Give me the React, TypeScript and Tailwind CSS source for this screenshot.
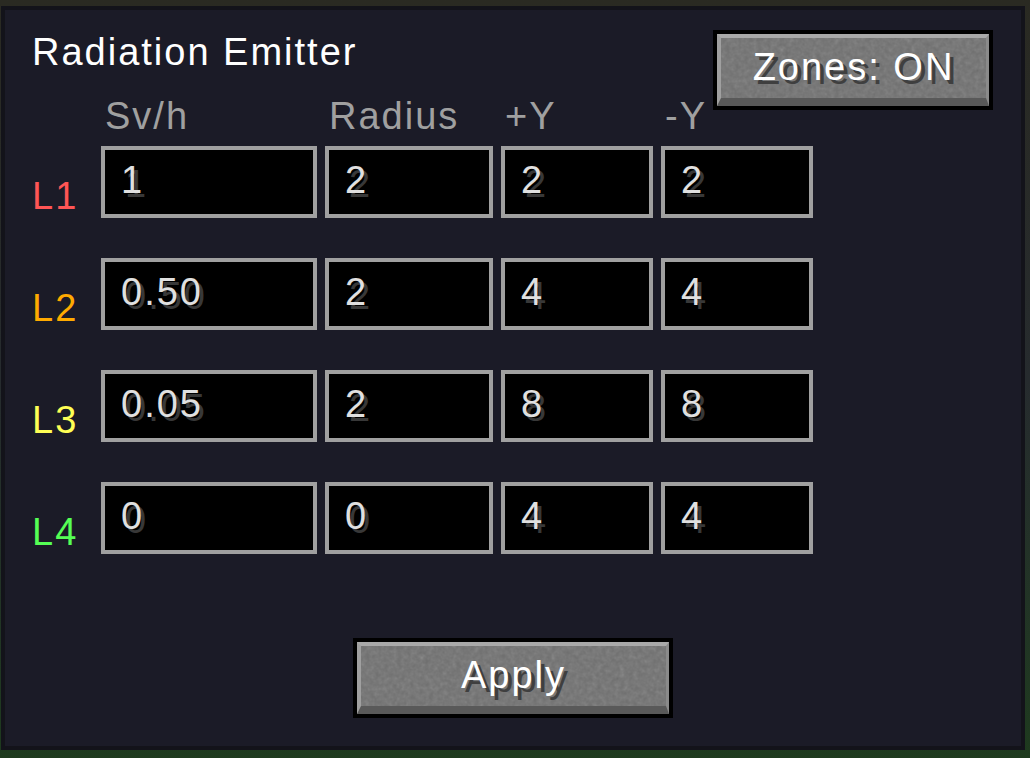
import React from 'react';

type Level = {
  label: string;
  color: string;
  values: [string, string, string, string];
};

const levels: Level[] = [
  { label: 'L1', color: 'text-[#ff5555]', values: ['1', '2', '2', '2'] },
  { label: 'L2', color: 'text-[#ffaa00]', values: ['0.50', '2', '4', '4'] },
  { label: 'L3', color: 'text-[#ffff55]', values: ['0.05', '2', '8', '8'] },
  { label: 'L4', color: 'text-[#55ff55]', values: ['0', '0', '4', '4'] },
];

const headers = ['Sv/h', 'Radius', '+Y', '-Y'];

const gridCols = 'grid grid-cols-[61px_216px_168px_152px_152px] gap-x-2';

// stone-ish speckle for the button face
const Speckle: React.FC = () => (
  <svg className="pointer-events-none absolute inset-0 h-full w-full opacity-25" aria-hidden>
    <filter id="stone">
      <feTurbulence type="fractalNoise" baseFrequency="0.22" numOctaves="2" seed="4" />
      <feColorMatrix type="saturate" values="0" />
    </filter>
    <rect width="100%" height="100%" filter="url(#stone)" />
  </svg>
);

const McButton: React.FC<{ label: string; className?: string }> = ({ label, className }) => (
  <button className={`shrink-0 border-4 border-black bg-black h-[80px] ${className ?? ''}`}>
    <div className="relative flex h-full items-center justify-center border-t-4 border-l-4 border-r-[3px] border-b-[8px] border-t-[#a9a9a9] border-l-[#a0a0a0] border-r-[#8a8a8a] border-b-[#595959] bg-[#6f6f6f] pb-[2px]">
      <Speckle />
      <span className="relative text-[38px] leading-none tracking-[2px] text-white [text-shadow:4px_4px_0_#3f3f3f]">
        {label}
      </span>
    </div>
  </button>
);

const Field: React.FC<{ value: string }> = ({ value }) => (
  <div className="h-[72px] border-4 border-[#a0a0a0] bg-black pl-4 pt-[11px]">
    <span className="text-[38px] leading-none tracking-[2px] text-[#e0e0e0] [text-shadow:4px_4px_0_#383838]">
      {value}
    </span>
  </div>
);

const App: React.FC = () => {
  return (
    <div className="w-[1030px] h-[758px] overflow-hidden bg-linear-to-b from-[#2a2a22] via-[#262b2e] to-[#1e3a1e] pt-[6px] pl-px font-['Liberation_Sans',Arial,sans-serif]">
      {/* Panel */}
      <div className="w-[1024px] h-[744px] border-4 border-[#13131a] bg-[#1b1b27]">
        {/* Title + zones toggle */}
        <div className="flex items-start justify-between pl-[27px] pr-7">
          <h1 className="mt-[23px] text-[38px] leading-none tracking-[2px] text-white">
            Radiation Emitter
          </h1>
          <McButton label="Zones: ON" className="mt-5 -mb-[39px] w-[280px]" />
        </div>

        <div className="pl-[27px]">
          {/* Column headers */}
          <div className={`${gridCols} mt-[26px] h-[49px]`}>
            <div />
            {headers.map((h) => (
              <div
                key={h}
                className="pl-1 text-[38px] leading-none tracking-[2px] text-[#a0a0a0]"
              >
                {h}
              </div>
            ))}
          </div>

          {/* Level rows */}
          <div className={`${gridCols} gap-y-10`}>
            {levels.map((lvl) => (
              <React.Fragment key={lvl.label}>
                <div className={`pt-[31px] text-[38px] leading-none tracking-[2px] ${lvl.color}`}>
                  {lvl.label}
                </div>
                {lvl.values.map((v, i) => (
                  <Field key={i} value={v} />
                ))}
              </React.Fragment>
            ))}
          </div>
        </div>

        <div className="flex justify-center pt-[84px]">
          <McButton label="Apply" className="w-[320px]" />
        </div>
      </div>
    </div>
  );
};

export default App;
